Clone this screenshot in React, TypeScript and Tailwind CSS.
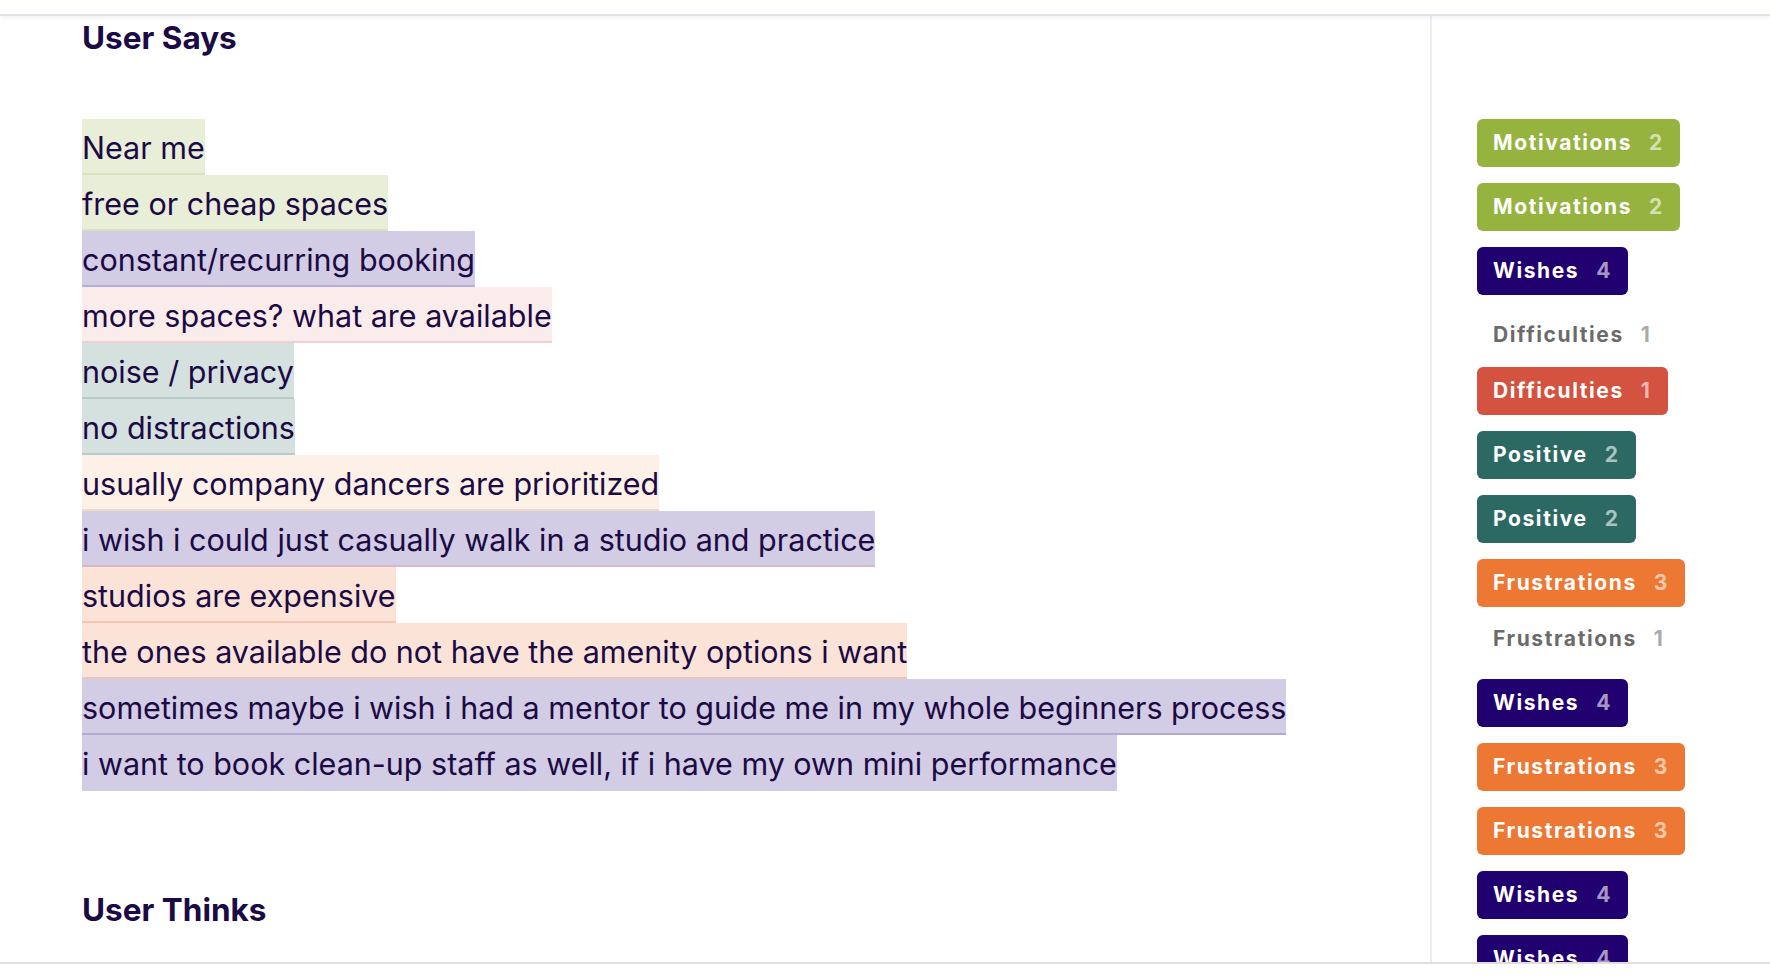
const says = [
  { text: 'Near me', tone: 'bg-[#e9eed9] border-[#d9e2bd]' },
  { text: 'free or cheap spaces', tone: 'bg-[#e9eed9] border-[#d9e2bd]' },
  { text: 'constant/recurring booking', tone: 'bg-[#d2cce4] border-[#b6aed4]' },
  { text: 'more spaces? what are available', tone: 'bg-[#fbecec] border-[#ecd2d2]' },
  { text: 'noise / privacy', tone: 'bg-[#d5e1df] border-[#b7ccc8]' },
  { text: 'no distractions', tone: 'bg-[#d5e1df] border-[#b7ccc8]' },
  { text: 'usually company dancers are prioritized', tone: 'bg-[#fdf0e7] border-[#f1d9ca]' },
  { text: 'i wish i could just casually walk in a studio and practice', tone: 'bg-[#d2cce4] border-[#d8b8c8]' },
  { text: 'studios are expensive', tone: 'bg-[#fbe3d7] border-[#f5c7b0]' },
  { text: 'the ones available do not have the amenity options i want', tone: 'bg-[#fbe3d7] border-[#e6c4c0]' },
  { text: 'sometimes maybe i wish i had a mentor to guide me in my whole beginners process', tone: 'bg-[#d2cce4] border-[#b3aad3]' },
  { text: 'i want to book clean-up staff as well, if i have my own mini performance', tone: 'bg-[#d2cce4] border-[#d2cce4]' },
];

const tags = [
  { label: 'Motivations', count: 2, tone: 'bg-[#97b33f]' },
  { label: 'Motivations', count: 2, tone: 'bg-[#97b33f]' },
  { label: 'Wishes', count: 4, tone: 'bg-[#210070]' },
  { label: 'Difficulties', count: 1, tone: '', shift: 'pt-2' },
  { label: 'Difficulties', count: 1, tone: 'bg-[#d45240]' },
  { label: 'Positive', count: 2, tone: 'bg-[#2d6963]' },
  { label: 'Positive', count: 2, tone: 'bg-[#2d6963]' },
  { label: 'Frustrations', count: 3, tone: 'bg-[#ed7833]' },
  { label: 'Frustrations', count: 1, tone: '', shift: 'pb-2' },
  { label: 'Wishes', count: 4, tone: 'bg-[#210070]' },
  { label: 'Frustrations', count: 3, tone: 'bg-[#ed7833]' },
  { label: 'Frustrations', count: 3, tone: 'bg-[#ed7833]' },
  { label: 'Wishes', count: 4, tone: 'bg-[#210070]' },
  { label: 'Wishes', count: 4, tone: 'bg-[#210070]' },
];

function Tag({ label, count, tone, shift = '' }: { label: string; count: number; tone: string; shift?: string }) {
  if (!tone) {
    // unselected tag: no fill, just grey text
    return (
      <div className={`h-10 shrink-0 flex items-center gap-[17px] px-4 text-[21px] font-bold tracking-[1.6px] text-[#6b6b6b] ${shift}`}>
        <span>{label}</span>
        <span className="text-[#aaaaaa]">{count}</span>
      </div>
    );
  }
  return (
    <div className={`h-12 w-fit shrink-0 flex items-center gap-[17px] px-4 rounded-md text-[21px] font-bold tracking-[1.6px] text-white ${tone}`}>
      <span>{label}</span>
      <span className="text-white/60">{count}</span>
    </div>
  );
}

export default function App() {
  return (
    <div className="h-screen flex flex-col bg-white text-[#1c0a45] overflow-hidden" style={{ fontFamily: 'Inter, "Noto Sans", sans-serif' }}>
      <div className="h-[16px] shrink-0 border-b-2 border-[#e3e3ea] shadow-[0_2px_4px_rgba(40,40,80,0.06)] z-10" />
      <div className="flex-1 flex min-h-0 overflow-hidden">
        {/* Transcript */}
        <main className="flex-1 pl-[82px] pt-[4px]">
          <h2 className="text-[31.5px] leading-[36px] font-bold">User Says</h2>
          <div className="mt-[63px] flex flex-col items-start">
            {says.map((s, i) => (
              <div key={i} className={`h-[56px] shrink-0 flex items-center pt-[4px] border-b-2 text-[30.5px] leading-[36px] ${s.tone}`}>
                {s.text}
              </div>
            ))}
          </div>
          <h2 className="mt-[101px] text-[31.5px] leading-[36px] font-bold">User Thinks</h2>
        </main>

        {/* Tag sidebar */}
        <aside className="w-[340px] shrink-0 border-l-2 border-[#ededf3] pl-[45px] pt-[103px] flex flex-col gap-4">
          {tags.map((t, i) => (
            <Tag key={i} {...t} />
          ))}
        </aside>
      </div>
      <div className="h-[14px] shrink-0 border-t-2 border-[#dedede]" />
    </div>
  );
}
